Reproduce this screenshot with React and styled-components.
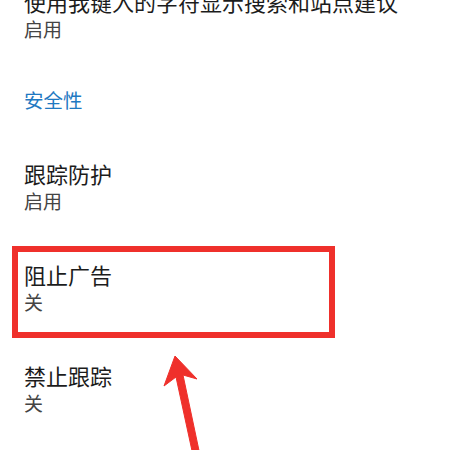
import React from "react";
import styled, { createGlobalStyle } from "styled-components";

const GlobalStyle = createGlobalStyle`
  html, body {
    margin: 0;
    padding: 0;
    background: #ffffff;
  }
  body {
    font-family: "Noto Sans CJK SC", "Noto Sans", sans-serif;
    -webkit-font-smoothing: antialiased;
  }
`;

const Screen = styled.div`
  position: relative;
  width: 465px;
  height: 450px;
  overflow: hidden;
  background: #ffffff;
`;

// the page is scrolled a little, the first row is cut at the top
const SettingsList = styled.div`
  display: flex;
  flex-direction: column;
  margin-top: -36px;
`;

const Item = styled.div`
  position: relative;
  display: flex;
  flex-direction: column;
  padding: 23px 24px;

  ${({ $highlighted }) =>
    $highlighted &&
    `
    &::after {
      content: "";
      position: absolute;
      top: 9px;
      bottom: 0;
      left: 12px;
      width: 323px;
      box-sizing: border-box;
      border: 6px solid #ef302b;
      pointer-events: none;
    }
  `}
`;

const Title = styled.div`
  font-size: 22px;
  line-height: 28px;
  color: #1c1c1c;
  white-space: nowrap;
`;

const Value = styled.div`
  margin-top: 1px;
  font-size: 19px;
  line-height: 26px;
  color: #444444;
`;

const SectionHeader = styled.div`
  padding: 22px 24px 23px;
  font-size: 19.5px;
  line-height: 26px;
  color: #1f79c2;
`;

const ArrowLayer = styled.svg`
  position: absolute;
  left: 0;
  top: 0;
  pointer-events: none;
`;

const rows = [
  { title: "使用我键入的字符显示搜索和站点建议", value: "启用" },
  { section: "安全性" },
  { title: "跟踪防护", value: "启用" },
  { title: "阻止广告", value: "关", highlighted: true },
  { title: "禁止跟踪", value: "关" },
];

function Arrow() {
  return (
    <ArrowLayer width="465" height="450" viewBox="0 0 465 450">
      <polygon
        points="175,356 197,379 183,375 201,460 194,460 176,377 164,386"
        fill="#ef302b"
        stroke="#ef302b"
        strokeWidth="1"
        strokeLinejoin="round"
      />
    </ArrowLayer>
  );
}

export default function App() {
  return (
    <Screen>
      <GlobalStyle />
      <SettingsList>
        {rows.map((row, i) =>
          row.section ? (
            <SectionHeader key={i}>{row.section}</SectionHeader>
          ) : (
            <Item key={i} $highlighted={row.highlighted}>
              <Title>{row.title}</Title>
              <Value>{row.value}</Value>
            </Item>
          )
        )}
      </SettingsList>
      <Arrow />
    </Screen>
  );
}
